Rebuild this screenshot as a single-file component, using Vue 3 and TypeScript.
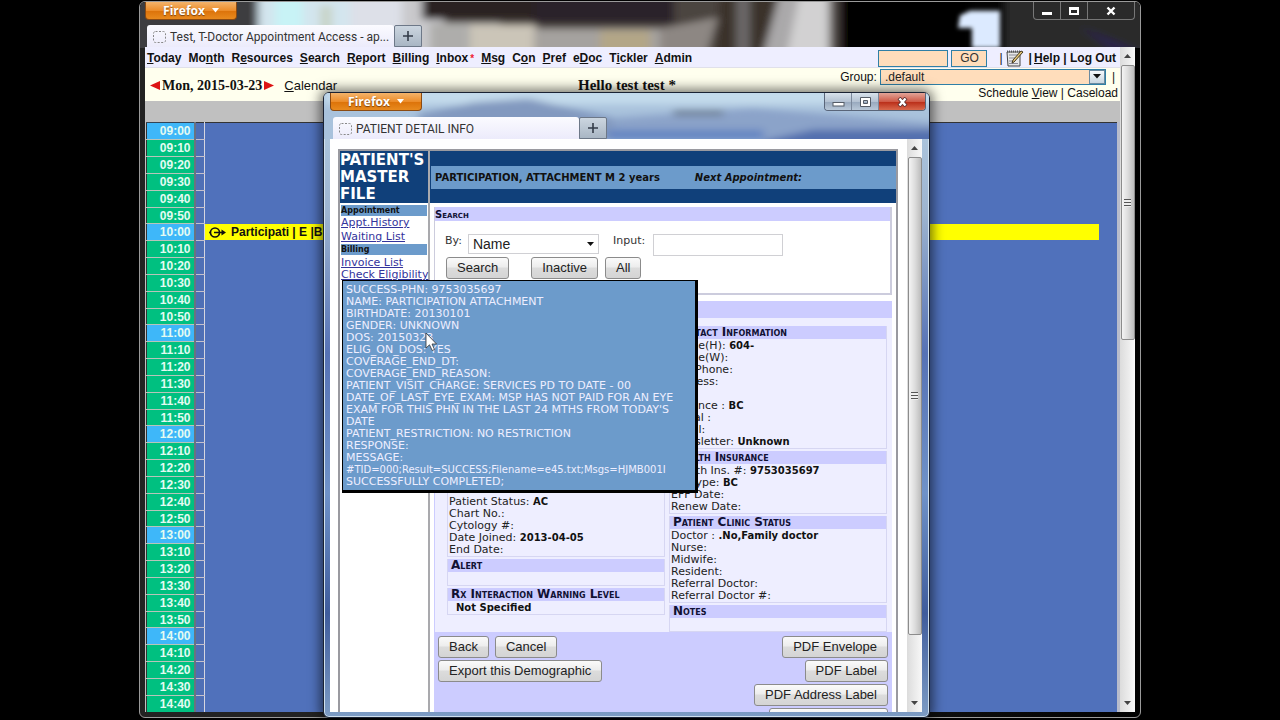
<script setup lang="ts">
import { computed, ref } from 'vue'

interface MenuLink { pre: string; key: string; post: string; mark?: boolean }
interface Field { label: string; value?: string }

const menu: MenuLink[] = [
  { pre: '', key: 'T', post: 'oday' },
  { pre: 'Mo', key: 'n', post: 'th' },
  { pre: 'R', key: 'e', post: 'sources' },
  { pre: '', key: 'S', post: 'earch' },
  { pre: '', key: 'R', post: 'eport' },
  { pre: '', key: 'B', post: 'illing' },
  { pre: '', key: 'I', post: 'nbox', mark: true },
  { pre: '', key: 'M', post: 'sg' },
  { pre: 'C', key: 'o', post: 'n' },
  { pre: '', key: 'P', post: 'ref' },
  { pre: 'e', key: 'D', post: 'oc' },
  { pre: 'T', key: 'i', post: 'ckler' },
  { pre: '', key: 'A', post: 'dmin' },
]

const slots = computed(() =>
  Array.from({ length: 35 }, (_, i) => {
    const minutes = 9 * 60 + i * 10
    const h = String(Math.floor(minutes / 60)).padStart(2, '0')
    const m = String(minutes % 60).padStart(2, '0')
    return { time: `${h}:${m}`, hour: m === '00', booked: `${h}:${m}` === '10:00' }
  }),
)

const contact: Field[] = [
  { label: 'Phone(H):', value: '604-' },
  { label: 'Phone(W):' },
  { label: 'Cell Phone:' },
  { label: 'Address:' },
  { label: '' },
  { label: 'Province :', value: 'BC' },
  { label: 'Postal :' },
  { label: 'Email:' },
  { label: 'Newsletter:', value: 'Unknown' },
]
const insurance: Field[] = [
  { label: 'Health Ins. #:', value: '9753035697' },
  { label: 'HC Type:', value: 'BC' },
  { label: 'EFF Date:' },
  { label: 'Renew Date:' },
]
const clinic: Field[] = [
  { label: 'Doctor :', value: '.No,Family doctor' },
  { label: 'Nurse:' },
  { label: 'Midwife:' },
  { label: 'Resident:' },
  { label: 'Referral Doctor:' },
  { label: 'Referral Doctor #:' },
]
const status: Field[] = [
  { label: 'Termination Date:' },
  { label: 'Patient Status:', value: 'AC' },
  { label: 'Chart No.:' },
  { label: 'Cytology #:' },
  { label: 'Date Joined:', value: '2013-04-05' },
  { label: 'End Date:' },
]
const rightGroups = [
  { title: 'Contact Information', fields: contact },
  { title: 'Health Insurance', fields: insurance },
  { title: 'Patient Clinic Status', fields: clinic },
  { title: 'Notes', fields: [{ label: '' }] as Field[] },
]

const eligibility: string[] = [
  'SUCCESS-PHN: 9753035697',
  'NAME: PARTICIPATION ATTACHMENT',
  'BIRTHDATE: 20130101',
  'GENDER: UNKNOWN',
  'DOS: 20150323',
  'ELIG_ON_DOS: YES',
  'COVERAGE_END_DT:',
  'COVERAGE_END_REASON:',
  'PATIENT_VISIT_CHARGE: SERVICES PD TO DATE - 00',
  "DATE_OF_LAST_EYE_EXAM: MSP HAS NOT PAID FOR AN EYE EXAM FOR THIS PHN IN THE LAST 24 MTHS FROM TODAY'S DATE",
  'PATIENT_RESTRICTION: NO RESTRICTION',
  'RESPONSE:',
  'MESSAGE:',
]

const group = ref('.default')
const searchBy = ref('Name')
const keyword = ref('')
const quick = ref('')
</script>

<template>
  <main class="desktop">
    <section class="window outer">
      <svg class="backdrop" viewBox="0 0 1000 48" preserveAspectRatio="none" aria-hidden="true">
        <defs>
          <filter id="soft" x="-10%" y="-30%" width="120%" height="160%"><feGaussianBlur stdDeviation="4" /></filter>
          <filter id="glow" x="-30%" y="-30%" width="160%" height="160%"><feGaussianBlur stdDeviation="2" /></filter>
        </defs>
        <rect width="1000" height="48" fill="#050505" />
        <g filter="url(#soft)">
          <rect x="-20" y="-10" width="140" height="70" fill="#3d3d40" />
          <rect x="118" y="-10" width="145" height="70" fill="#d3e5ee" />
          <rect x="135" y="-10" width="28" height="40" fill="#c8f3f6" />
          <rect x="180" y="4" width="12" height="50" fill="#c8d4c8" />
          <rect x="210" y="-10" width="55" height="70" fill="#dde0e8" />
          <rect x="262" y="-10" width="440" height="70" fill="#4b443f" />
          <rect x="262" y="-10" width="42" height="70" fill="#c9c9cc" />
          <rect x="282" y="-10" width="112" height="28" fill="#2b2024" />
          <rect x="290" y="22" width="70" height="40" fill="#aeadab" />
          <rect x="330" y="24" width="66" height="40" fill="#cbc5b8" />
          <rect x="394" y="-10" width="140" height="32" fill="#29202a" />
          <rect x="394" y="28" width="130" height="30" fill="#a5a29f" />
          <rect x="460" y="30" width="50" height="30" fill="#b3a687" />
          <path d="M520 28L578 16L566 56H520Z" fill="#8d8783" />
          <path d="M580 -8H640L620 56H575Z" fill="#3b3129" />
          <rect x="596" y="-10" width="14" height="70" fill="#6b6868" />
          <path d="M640 -10H690V60H622Z" fill="#aaa9aa" />
          <path d="M660 -10H688V60H646Z" fill="#d2d1d2" />
          <rect x="700" y="-10" width="130" height="70" fill="#050505" />
          <rect x="864" y="-10" width="150" height="70" fill="#29292c" />
          <path d="M940 26L1000 52L975 52Z" fill="#2b2450" />
        </g>
        <path d="M820 14L830 9H860V48H832V27L818 27Z" fill="#dceaff" filter="url(#glow)" />
      </svg>

      <header class="titlebar">
        <button class="firefox" type="button">Firefox <svg width="7" height="5" viewBox="0 0 7 5" aria-hidden="true"><path d="M0 0H7L3.500 4.500Z" fill="#fff" /></svg></button>
        <div class="controls dark">
          <button type="button" aria-label="Minimize"><svg width="12" height="10" viewBox="0 0 12 10"><rect x="1" y="6" width="10" height="3" fill="#fff" /></svg></button>
          <button type="button" aria-label="Maximize"><svg width="12" height="10" viewBox="0 0 12 10"><path d="M1 1H11V9H1ZM3 4V7H9V4Z" fill="#fff" fill-rule="evenodd" /></svg></button>
          <button class="close" type="button" aria-label="Close"><svg width="12" height="10" viewBox="0 0 12 10"><path d="M2.500 1.500L9.500 8.500M9.500 1.500L2.500 8.500" stroke="#fff" stroke-width="2.400" /></svg></button>
        </div>
      </header>
      <nav class="tabs">
        <button class="tab main-tab" type="button">
          <svg width="15" height="14" viewBox="0 0 15 14" aria-hidden="true"><rect x="1.500" y="1.500" width="12" height="11" rx="2" fill="none" stroke="#888" stroke-dasharray="2 1.500" /></svg>
          Test, T-Doctor Appointment Access - ap...
        </button>
        <button class="plus" type="button" aria-label="New tab"><svg width="12" height="12" viewBox="0 0 12 12"><path d="M6 1V11M1 6H11" stroke="#333b48" stroke-width="1.600" /></svg></button>
      </nav>

      <div class="client">
        <div class="page">
          <div class="menu">
            <nav class="links">
              <a v-for="item in menu" :key="item.key + item.post" href="#">{{ item.pre }}<u>{{ item.key }}</u>{{ item.post }}<span v-if="item.mark" class="mark">*</span></a>
            </nav>
            <div class="tools">
              <input v-model="quick" class="quick" aria-label="Quick search" />
              <button class="go" type="button">GO</button>
              <span class="bar">|</span>
              <svg width="18" height="18" viewBox="0 0 18 18" aria-label="Scratch pad"><path d="M1 3H14V17H2Z" fill="#e8e8e8" stroke="#444" /><path d="M1 2.500H15" stroke="#555" stroke-width="2" stroke-dasharray="1 1" /><path d="M3 6H12M3 9H9M3 12H8M3 14.500H12" stroke="#8a8a98" /><path d="M17 3L8 13L6 14L7 11L15 2Z" fill="#e8c878" stroke="#42391f" /></svg>
              <span class="end">|<a class="help" href="#"><u>H</u>elp</a> | <a href="#">Log Out</a></span>
            </div>
          </div>
          <div class="daybar">
            <div class="date">
              <svg width="10" height="9" viewBox="0 0 10 9" aria-hidden="true"><path d="M10 0V9L0 4.500Z" fill="#dd1414" /></svg>
              <b>Mon, 2015-03-23</b>
              <svg width="10" height="9" viewBox="0 0 10 9" aria-hidden="true"><path d="M0 0V9L10 4.500Z" fill="#dd1414" /></svg>
              <a href="#"><u>C</u>alendar</a>
            </div>
            <b class="hello">Hello test test *</b>
            <div class="filters">
              <div class="grouprow">
                <label for="group">Group:</label>
                <span class="combo">
                  <select id="group" v-model="group"><option>.default</option></select>
                  <i class="drop"><svg width="8" height="5" viewBox="0 0 8 5" aria-hidden="true"><path d="M0 0H8L4 4.500Z" fill="#111" /></svg></i>
                </span>
                <span class="bar">|</span>
              </div>
              <div class="views"><a href="#">Schedule <u>V</u>iew</a> | <a href="#">Caseload</a></div>
            </div>
          </div>
          <div class="greyline"></div>
          <div class="schedule">
            <table>
              <tbody>
                <tr v-for="s in slots" :key="s.time">
                  <th :class="{ hour: s.hour }" scope="row">{{ s.time }}</th>
                  <td class="mini"></td>
                  <td class="slot">
                    <div v-if="s.booked" class="booking">
                      <svg width="17" height="11" viewBox="0 0 17 11" aria-hidden="true"><circle cx="6" cy="5.500" r="4.500" fill="none" stroke="#111" stroke-width="1.600" /><path d="M5 5.500H13" stroke="#111" stroke-width="1.600" /><path d="M12.500 2.500L17 5.500L12.500 8.500Z" fill="#111" /><circle cx="1" cy="5.500" r="1" fill="#111" /></svg>
                      <a href="#">Participati</a> | <a href="#">E</a> |<a href="#">B</a> |
                    </div>
                  </td>
                </tr>
              </tbody>
            </table>
          </div>
        </div>
        <div class="scroll tall">
          <svg class="arrow" width="7" height="4" viewBox="0 0 7 4" aria-hidden="true"><path d="M0 4H7L3.500 0Z" fill="#444" /></svg>
          <div class="thumb"><i></i></div>
          <svg class="arrow" width="7" height="4" viewBox="0 0 7 4" aria-hidden="true"><path d="M0 0H7L3.500 4Z" fill="#444" /></svg>
        </div>
      </div>
    </section>

    <section class="window inner">
      <svg class="backdrop" viewBox="0 0 606 48" preserveAspectRatio="none" aria-hidden="true">
        <rect width="606" height="48" fill="#a9c2dc" />
        <g filter="url(#soft)">
          <path d="M0 -5H620V12H0Z" fill="#c4dbec" />
          <path d="M95 50V22L150 10L205 6L290 26V50Z" fill="#8299bf" />
          <path d="M290 50V26L430 16L620 32V50Z" fill="#8ba3c9" />
          <path d="M440 50L490 38H620V55H440Z" fill="#536fae" />
          <path d="M284 38H440V50H284Z" fill="#6887c2" />
          <path d="M350 18H400V24H350Z" fill="#6f8196" />
        </g>
      </svg>
      <header class="titlebar">
        <button class="firefox" type="button">Firefox <svg width="7" height="5" viewBox="0 0 7 5" aria-hidden="true"><path d="M0 0H7L3.500 4.500Z" fill="#fff" /></svg></button>
        <div class="controls light">
          <button type="button" aria-label="Minimize"><svg width="13" height="10" viewBox="0 0 13 10"><rect x="1" y="5.500" width="11" height="3.500" fill="#fff" stroke="#555c66" /></svg></button>
          <button type="button" aria-label="Maximize"><svg width="13" height="10" viewBox="0 0 13 10"><path d="M1.500 0.500H11.500V9.500H1.500ZM4.500 3.500V6.500H8.500V3.500Z" fill="#fff" fill-rule="evenodd" stroke="#555c66" /></svg></button>
          <button class="close" type="button" aria-label="Close"><svg width="13" height="10" viewBox="0 0 13 10"><path d="M3 1L10 9M10 1L3 9" stroke="#5b3030" stroke-width="4" /><path d="M3.500 1.500L9.500 8.500M9.500 1.500L3.500 8.500" stroke="#fff" stroke-width="2.400" /></svg></button>
        </div>
      </header>
      <nav class="tabs">
        <button class="tab detail-tab" type="button">
          <svg width="15" height="14" viewBox="0 0 15 14" aria-hidden="true"><rect x="1.500" y="1.500" width="12" height="11" rx="2" fill="none" stroke="#888" stroke-dasharray="2 1.500" /></svg>
          PATIENT DETAIL INFO
        </button>
        <button class="plus" type="button" aria-label="New tab"><svg width="12" height="12" viewBox="0 0 12 12"><path d="M6 1V11M1 6H11" stroke="#333b48" stroke-width="1.600" /></svg></button>
      </nav>

      <div class="client">
        <div class="file">
          <aside>
            <h1>PATIENT'S MASTER FILE</h1>
            <div class="side">
              <h2>Appointment</h2>
              <a class="roomy" href="#">Appt.History</a>
              <a class="roomy" href="#">Waiting List</a>
              <h2>Billing</h2>
              <a class="first" href="#">Invoice List</a>
              <a href="#">Check Eligibility</a>
            </div>
          </aside>
          <div class="record">
            <div class="banner">
              <p><b>PARTICIPATION, ATTACHMENT M 2 years</b><b class="next">Next Appointment:</b></p>
            </div>
            <div class="body">
              <form class="searchbox" @submit.prevent>
                <h3>Search</h3>
                <div class="fields">
                  <label for="by">By:</label>
                  <span class="pick">
                    <select id="by" v-model="searchBy"><option>Name</option></select>
                    <svg width="7" height="4" viewBox="0 0 7 4" aria-hidden="true"><path d="M0 0H7L3.500 4Z" fill="#111" /></svg>
                  </span>
                  <label class="inputlabel" for="kw">Input:</label>
                  <input id="kw" v-model="keyword" />
                </div>
                <div class="actions">
                  <button class="btn wide" type="submit">Search</button>
                  <button class="btn" type="button">Inactive</button>
                  <button class="btn" type="button">All</button>
                </div>
              </form>

              <div class="details">
                <div class="cap"></div>
                <div class="columns">
                  <div class="col">
                    <section class="group grow">
                      <p v-for="f in status" :key="f.label">{{ f.label }} <b>{{ f.value }}</b></p>
                    </section>
                    <section class="group"><h3>Alert</h3><p></p></section>
                    <section class="group"><h3>Rx Interaction Warning Level</h3><p class="indent"><b>Not Specified</b></p></section>
                  </div>
                  <div class="col">
                    <section v-for="g in rightGroups" :key="g.title" class="group">
                      <h3>{{ g.title }}</h3>
                      <p v-for="(f, i) in g.fields" :key="i">{{ f.label }} <b>{{ f.value }}</b></p>
                    </section>
                  </div>
                </div>
                <div class="footer">
                  <div class="leftbtns">
                    <button class="btn" type="button">Back</button>
                    <button class="btn" type="button">Cancel</button>
                    <button class="btn" type="button">Export this Demographic</button>
                  </div>
                  <div class="rightbtns">
                    <button class="btn" type="button">PDF Envelope</button>
                    <button class="btn" type="button">PDF Label</button>
                    <button class="btn" type="button">PDF Address Label</button>
                    <button class="btn blank" type="button" aria-label="More"></button>
                  </div>
                </div>
              </div>
            </div>
          </div>
        </div>
        <div class="scroll full">
          <svg class="arrow" width="7" height="4" viewBox="0 0 7 4" aria-hidden="true"><path d="M0 4H7L3.500 0Z" fill="#444" /></svg>
          <div class="thumb"><i></i></div>
          <svg class="arrow" width="7" height="4" viewBox="0 0 7 4" aria-hidden="true"><path d="M0 0H7L3.500 4Z" fill="#444" /></svg>
        </div>
      </div>

      <div class="tooltip" role="tooltip">
        <p v-for="line in eligibility" :key="line">{{ line }}</p>
        <p class="raw">#TID=000;Result=SUCCESS;Filename=e45.txt;Msgs=HJMB001I</p>
        <p>SUCCESSFULLY COMPLETED;</p>
      </div>
      <svg class="cursor" width="13" height="20" viewBox="0 0 13 20" aria-hidden="true"><path d="M1 1V16L4.500 12.800L7.200 18.500L9.500 17.500L7 12H11.500Z" fill="#fff" stroke="#333" stroke-width="0.800" /></svg>
    </section>
  </main>
</template>

<style>
body { margin: 0; background: #000; }
</style>

<style scoped>
* { box-sizing: border-box; }
p, h1, h2, h3 { margin: 0; }
button, input, select { font-family: inherit; margin: 0; }
.desktop {
  position: relative;
  height: 100vh;
  overflow: hidden;
  background: #000;
  font-family: "Liberation Sans", Arial, sans-serif;
  color: #111;
}
.window {
  position: absolute;
  display: flex;
  flex-direction: column;
  border-radius: 6px;
}
.outer {
  inset: 1px 139px 2px 139px;
  border: 1px solid #9a9a9a;
  background: linear-gradient(90deg, #222 0 50%, #000);
  padding: 0 5px 5px 5px;
  overflow: hidden;
}
.inner {
  inset: 92px 350px 2px 323px;
  border: 1px solid #1a2233;
  background: linear-gradient(180deg, #b4cde2 0, #9db4d0 120px, #5672b5 260px, #6f92c8 400px, #3f5c9c 520px, #7d9cc4);
  padding: 0 7px 5px 6px;
  box-shadow: 0 0 12px 3px rgba(0, 0, 0, 0.55), inset 0 0 0 1px #cfe0ee;
}
.backdrop { position: absolute; left: 0; top: 0; width: 100%; height: 46px; border-radius: 5px 5px 0 0; }
.titlebar { position: relative; display: flex; justify-content: space-between; height: 23px; flex: none; }
.inner .titlebar { height: 24px; }
.firefox {
  display: flex;
  align-items: center;
  justify-content: center;
  gap: 7px;
  width: 92px;
  height: 18px;
  padding: 0;
  border: 1px solid #8a4a12;
  border-top: 0;
  border-radius: 0 0 4px 4px;
  background: linear-gradient(#f3b36b, #ec8d2b 50%, #dc7209 52%, #e88a1e);
  color: #fff;
  font: bold 12px/16px "Open Sans", sans-serif;
  text-shadow: 0 1px 1px #7a4210;
}
.controls { display: flex; height: 18px; border: 1px solid #777; border-top: 0; border-radius: 0 0 4px 4px; overflow: hidden; }
.controls button { display: flex; align-items: center; justify-content: center; width: 27px; padding: 0; border: 0; border-right: 1px solid #777; background: transparent; }
.controls .close { width: 46px; border: 0; }
.controls.light { margin-right: -4px; border-color: #596579; }
.controls.light button { background: linear-gradient(#d8e2ec, #b4c2d2 50%, #97a8bd 52%, #b9c8d8); border-color: #7b889b; }
.controls.light .close { background: linear-gradient(#e2a498, #cf5b48 50%, #b92c17 52%, #d9694c); }
.tabs { position: relative; display: flex; flex: none; height: 22px; }
.inner .tabs { padding-left: 3px; }
.outer .tabs { padding-left: 2px; }
.tab {
  display: flex;
  align-items: center;
  gap: 3px;
  padding: 2px 5px 0 5px;
  border: 0;
  border-radius: 3px 3px 0 0;
  background: linear-gradient(#fbfbff, #ecebfb);
  color: #333;
  font: 12px/20px Roboto, "Open Sans", sans-serif;
  white-space: nowrap;
}
.tab svg { flex: none; }
.main-tab { width: 247px; }
.detail-tab { width: 246px; }
.plus { display: flex; align-items: center; justify-content: center; width: 28px; padding: 0; border: 1px solid #6d7888; border-radius: 2px 2px 0 0; background: linear-gradient(#ccd6e0, #a9b6c4); }
.client { position: relative; display: flex; flex: 1; min-height: 0; background: #fff; overflow: hidden; }
.page { flex: 1; min-width: 0; display: flex; flex-direction: column; }
.page a { color: inherit; text-decoration: none; }
.menu { display: flex; justify-content: space-between; align-items: center; flex: none; height: 21px; background: #eeeeff; border-bottom: 1px solid #e0e0ea; font-size: 12px; font-weight: bold; padding: 2px 4px 0 2px; }
.links { display: flex; align-items: baseline; gap: 7px; }
.mark { color: #e23; font-size: 10px; padding-left: 2px; }
.tools { display: flex; align-items: center; gap: 3px; white-space: nowrap; }
.quick { width: 70px; height: 17px; border: 1px solid #2f7fa6; background: #ffddbb; padding: 0 2px; }
.go { width: 36px; height: 17px; border: 1px solid #2f7fa6; background: #ffddbb; font-size: 12px; line-height: 14px; padding: 0; color: #333; }
.tools .bar { padding-left: 9px; }
.tools .end { padding-left: 2px; }
.help { padding-left: 2px; }
.bar { font-weight: normal; }
.daybar { display: grid; grid-template-columns: 1fr auto 1fr; flex: none; height: 33px; background: #ffffee; padding: 0 2px 0 5px; }
.date { display: flex; align-items: center; gap: 2px; height: 34px; font-size: 13px; }
.date b { font: bold 14px/17px "Liberation Serif", serif; }
.date a { padding-left: 8px; }
.hello { font: bold 15px/34px "Liberation Serif", serif; padding-right: 14px; }
.filters { display: flex; flex-direction: column; align-items: flex-end; font-size: 12px; line-height: 16px; }
.grouprow { display: flex; align-items: center; gap: 3px; height: 17px; }
.combo { position: relative; display: flex; }
.combo select { width: 226px; height: 16px; border: 1px solid #2f7fa6; background: #ffddbb; appearance: none; border-radius: 0; padding: 0 4px; font-size: 12px; line-height: 14px; color: #222; }
.drop { position: absolute; right: 1px; top: 1px; width: 16px; height: 14px; display: flex; align-items: center; justify-content: center; border: 1px solid #6a8aa0; background: linear-gradient(#f6f9fc, #c9d6e0); pointer-events: none; }
.grouprow .bar { padding: 0 3px; }
.greyline { flex: none; height: 21px; background: #c0c0c0; }
.schedule { flex: 1; min-height: 0; overflow: hidden; background: #c0c0c0; border-left: 1px solid #c0c0c0; border-right: 3px solid #b8bccb; }
table { width: 100%; border-collapse: collapse; table-layout: fixed; background: #486ebd; border-top: 1px solid #333; }
tr { height: 17px; }
tr:nth-child(6n) { height: 16px; }
th, td { padding: 0; border-bottom: 1px solid #c6c0cc; height: 16px; }
th { width: 48px; background: #00c080; border: 1px solid #b9c4ba; border-left-color: #333; border-top-color: #345; color: #e4fbf2; font-size: 12px; line-height: 14px; text-align: right; padding-right: 3px; }
th.hour { background: #3eb7f9; }
.mini { width: 10px; background: #4f6fb5; border-left: 2px solid #6a7280; border-right: 1px solid #d6d6e0; }
.slot { border: 0; background: #5071bb; padding: 0 18px 0 0; }
.booking { display: flex; align-items: center; height: 16px; background: #ff0; padding-left: 4px; font-size: 12px; font-weight: bold; line-height: 14px; white-space: pre; }
.booking svg { margin-right: 5px; }
.scroll { display: flex; flex-direction: column; align-items: center; flex: none; width: 15px; background: linear-gradient(90deg, #dcdcdc, #f8f8f8); }
.arrow { flex: none; margin: 7px 0; }
.thumb { display: flex; align-items: center; justify-content: center; width: 14px; border: 1px solid #8c8c8c; border-radius: 2px; background: linear-gradient(90deg, #f4f4f4, #dcdcdc 50%, #bcbcbc); }
.thumb i { width: 7px; height: 8px; background: repeating-linear-gradient(#555 0 1px, #eee 1px 3px); }
.tall .thumb { height: 275px; margin-bottom: auto; }
.full .thumb { height: 478px; margin-bottom: auto; }

.inner .client { font: 11px/12px "DejaVu Sans", Verdana, sans-serif; }
.file { flex: 1; display: flex; align-items: stretch; margin: 10px 9px 0 8px; border: 2px solid #9a9aa0; border-bottom: 0; min-width: 0; }
aside { width: 90px; flex: none; border-right: 2px solid #a9a9ad; }
h1 { height: 52px; background: #10407a; color: #fff; font-size: 15px; line-height: 17px; padding-top: 1px; }
.side { display: flex; flex-direction: column; padding: 2px 1px 0 1px; }
.side h2 { background: #6c9bcb; font-size: 8px; line-height: 11px; }
.side a { color: #33339c; line-height: 12px; white-space: nowrap; }
.side a.roomy { line-height: 14px; }
.side a.first { padding-top: 2px; }
.record { flex: 1; min-width: 0; }
.banner { display: flex; align-items: center; height: 52px; background: #10407a; padding-left: 1px; }
.banner p { flex: 1; background: #6c9bcb; line-height: 23px; font-size: 10px; padding-left: 4px; white-space: nowrap; }
.banner .next { font-style: italic; padding-left: 35px; }
.body { display: flex; flex-direction: column; gap: 6px; padding: 4px 4px 0 4px; }
.searchbox { height: 88px; border: 1px solid #ccccdd; border-width: 0 2px 2px 1px; }
h3 { background: #ccccff; font-size: 12px; line-height: 13px; font-variant: small-caps; color: #111133; }
.searchbox h3 { line-height: 14px; height: 14px; font-size: 10px; padding-top: 1px; }
.fields { display: flex; align-items: flex-start; height: 33px; padding: 13px 0 0 10px; }
.fields label { line-height: 14px; color: #333; }
.pick { position: relative; margin-left: 6px; }
.pick select { width: 131px; height: 20px; border: 1px solid #d0d0d4; background: #fff; appearance: none; padding: 0 4px; font: 14px/18px "Liberation Sans", Arial, sans-serif; color: #222; }
.pick svg { position: absolute; right: 5px; top: 8px; pointer-events: none; }
.inputlabel { margin-left: 14px; }
.fields input { width: 130px; height: 22px; margin-left: 8px; border: 1px solid #d0d0d4; }
.actions { display: flex; gap: 7px; padding: 3px 0 0 11px; }
.wide { margin-right: 15px; }
.btn { height: 22px; border: 1px solid #8b8b8b; border-radius: 3px; background: linear-gradient(#fafafa, #ededed 45%, #dcdcdc 50%, #d4d4d4); padding: 0 10px; font: 13px/18px "Liberation Sans", Arial, sans-serif; color: #222; white-space: nowrap; }
.details { background: #ccccff; }
.cap { height: 17px; background: #ccccff; }
.columns { display: grid; grid-template-columns: 1fr 1fr; gap: 4px; padding: 8px 5px 0 12px; background: #eeeeff; border-left: 1px solid #ccccff; }
.col { display: flex; flex-direction: column; gap: 2px; }
.col:first-child { padding-bottom: 17px; }
.group { border: 1px solid #d6d6f2; border-top: 0; }
.group h3 { padding-left: 3px; margin-bottom: 1px; }
.group p { height: 12px; padding-left: 1px; color: #222; white-space: nowrap; }
.group p.indent { padding-left: 8px; }
.group b { color: #111; font-size: 10px; }
.grow { flex: 1; display: flex; flex-direction: column; justify-content: flex-end; }
.footer { display: flex; justify-content: space-between; padding: 4px 4px 0 4px; }
.leftbtns { display: flex; flex-wrap: wrap; align-content: flex-start; gap: 2px 6px; width: 180px; }
.rightbtns { display: flex; flex-direction: column; align-items: flex-end; gap: 2px; }
.blank { width: 119px; }
.tooltip {
  position: absolute;
  left: 18px;
  top: 187px;
  width: 356px;
  padding: 3px 10px 2px 3px;
  border: 1px solid #000;
  border-width: 1px 3px 3px 1px;
  background: #6c9bcb;
  color: #eeeeff;
  font: 11px/12px "DejaVu Sans", Verdana, sans-serif;
}
.tooltip .raw { font-size: 10px; white-space: nowrap; }
.cursor { position: absolute; left: 101px; top: 239px; }
</style>
